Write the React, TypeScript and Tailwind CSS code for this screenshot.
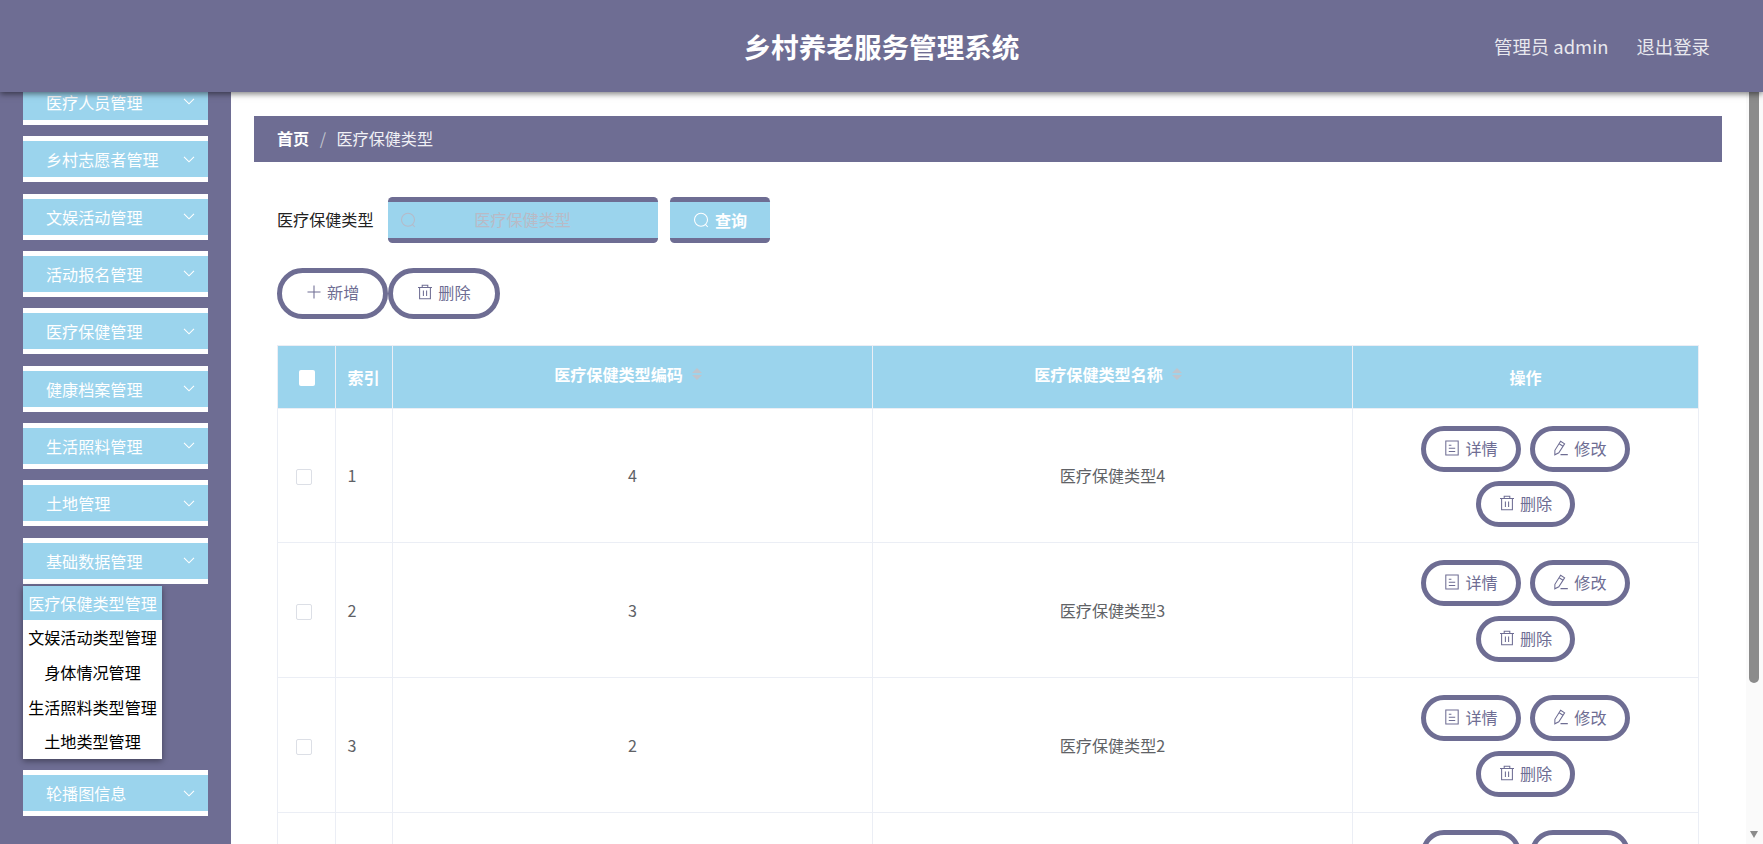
import { useState, type ReactNode } from "react";

const menus = [
  "医疗人员管理",
  "乡村志愿者管理",
  "文娱活动管理",
  "活动报名管理",
  "医疗保健管理",
  "健康档案管理",
  "生活照料管理",
  "土地管理",
  "基础数据管理",
  "轮播图信息",
];

const subMenus = ["医疗保健类型管理", "文娱活动类型管理", "身体情况管理", "生活照料类型管理", "土地类型管理"];

const rows = [
  { code: "4", name: "医疗保健类型4" },
  { code: "3", name: "医疗保健类型3" },
  { code: "2", name: "医疗保健类型2" },
  { code: "1", name: "医疗保健类型1" },
];

function Icon({ children, className = "size-4" }: { children: ReactNode; className?: string }) {
  return (
    <svg className={`shrink-0 ${className}`} viewBox="0 0 16 16" fill="none" stroke="currentColor" strokeWidth={1.05}>
      {children}
    </svg>
  );
}

const SearchIcon = () => (
  <Icon>
    <circle cx="8" cy="7.8" r="6.5" />
    <path d="M12.4 12.4l2.4 2.6" />
  </Icon>
);

const PlusIcon = () => (
  <Icon>
    <path d="M8 1.5v13M1.5 8h13" />
  </Icon>
);

const TrashIcon = () => (
  <Icon>
    <path d="M1 3.5h14M5.2 3.5V1.2h5.6v2.3M2.6 3.5v11.3h10.8V3.5M6.4 6.5v5.5M9.6 6.5v5.5" />
  </Icon>
);

const DetailIcon = () => (
  <Icon>
    <path d="M1.8 1h12.4v14H1.8zM4.8 5.2h2.6M4.8 8.2h6.4M4.8 11.4h6.4" />
  </Icon>
);

const EditIcon = () => (
  <Icon>
    <path d="M7.6 1.3l4 2.5-5.8 9-4 2 .1-4.5zM6.1 3.7l4 2.5M7.5 14.6h7.3" />
  </Icon>
);

const ChevronIcon = () => (
  <svg className="h-[7px] w-3" viewBox="0 0 12 7" fill="none" stroke="currentColor" strokeWidth={1.1}>
    <path d="M1 0.8L6 5.8l5-5" />
  </svg>
);

function PillButton({ icon, label, large = false }: { icon: ReactNode; label: string; large?: boolean }) {
  return (
    <button
      className={`flex items-center justify-center gap-[5px] rounded-full border-[5px] border-[#6e6d93] bg-white pb-[2px] text-[16.1px] leading-none text-[#6e6d93] ${
        large ? "h-[51.6px] w-[111.3px]" : "h-[46px] w-[99.5px]"
      }`}
    >
      {icon}
      <span>{label}</span>
    </button>
  );
}

function SortHeader({ label }: { label: string }) {
  return (
    <div className="flex items-center justify-center border-r border-[#ebeef5] pr-[9px] pb-[5px]">
      <span>{label}</span>
      <span className="ml-[9px] flex flex-col gap-[2px]">
        <span className="border-x-[5px] border-b-[5px] border-x-transparent border-b-[#c0c4cc]" />
        <span className="border-x-[5px] border-t-[5px] border-x-transparent border-t-[#c0c4cc]" />
      </span>
    </div>
  );
}

export default function App() {
  const [active, setActive] = useState(0);

  return (
    <div className="flex h-[844px] w-[1763px] flex-col overflow-hidden bg-white font-['Noto_Sans_CJK_SC',sans-serif] text-[16.1px]">
      {/* Top bar */}
      <header className="relative z-10 grid h-[92px] shrink-0 grid-cols-[1fr_auto_1fr] items-center bg-[#6e6d93] pt-[2px] shadow-[0_2px_6px_rgba(0,0,0,0.5)]">
        <span />
        <h1 className="text-[27.6px] font-bold text-white">乡村养老服务管理系统</h1>
        <div className="flex justify-end gap-7 pr-[53px] text-[18.4px] text-[#e8e8ee]">
          <span>管理员 admin</span>
          <span>退出登录</span>
        </div>
      </header>

      <div className="flex min-h-0 flex-1">
        {/* Sidebar, scrolled a little past its first entry */}
        <aside className="w-[231px] shrink-0 overflow-hidden bg-[#6e6d93] pl-[23px]">
          <div className="-mt-[13px] flex w-[185px] flex-col">
            {menus.map((menu) => (
              <div key={menu} className="mb-[11.5px]">
                <div className="flex h-[45.85px] items-center justify-between border-y-[5px] border-white bg-[#9bd4ed] pr-[13px] pl-[23px] text-white">
                  <span>{menu}</span>
                  <ChevronIcon />
                </div>
                {menu === "基础数据管理" && (
                  <ul className="mt-[2.3px] w-[139px] bg-white text-center text-black shadow-[0_2px_6px_rgba(0,0,0,0.4)]">
                    {subMenus.map((sub, i) => (
                      <li
                        key={sub}
                        onClick={() => setActive(i)}
                        className={`h-[34.6px] cursor-pointer leading-[34px] whitespace-nowrap ${
                          i === active ? "bg-[#9bd4ed] text-white" : ""
                        }`}
                      >
                        {sub}
                      </li>
                    ))}
                  </ul>
                )}
              </div>
            ))}
          </div>
        </aside>

        <main className="min-w-0 flex-1 overflow-hidden pt-[23.5px] pl-[23px]">
          {/* Breadcrumb */}
          <div className="flex h-[46px] w-[1468px] items-center bg-[#6e6d93] pl-[23px] text-[#f0f0f5]">
            <span className="font-bold text-white">首页</span>
            <span className="mx-[10.5px] text-[#c0c4cc]">/</span>
            <span>医疗保健类型</span>
          </div>

          <div className="w-[1445px] pl-[23px]">
            {/* Search form */}
            <div className="mt-[35px] flex items-center">
              <span className="text-[#222]">医疗保健类型</span>
              <div className="ml-[14px] flex h-[46px] w-[270px] items-center rounded-[4.6px] border-y-[5px] border-[#6e6d93] bg-[#9bd4ed] pl-3 text-[#b6bac8]">
                <SearchIcon />
                <input
                  placeholder="医疗保健类型"
                  className="mr-7 min-w-0 flex-1 bg-transparent text-center outline-none placeholder:text-[#b9bac6]"
                />
              </div>
              <button className="ml-3 flex h-[46px] w-[100px] items-center justify-center gap-[6px] rounded-[4.6px] border-y-[5px] border-[#6e6d93] bg-[#9bd4ed] pt-px pl-px font-bold text-white">
                <SearchIcon />
                <span>查询</span>
              </button>
            </div>

            {/* Toolbar */}
            <div className="mt-[25px] flex">
              <PillButton large icon={<PlusIcon />} label="新增" />
              <PillButton large icon={<TrashIcon />} label="删除" />
            </div>

            {/* Table */}
            <div className="mt-[26px] border-t border-l border-[#ebeef5]">
              <div className="grid h-[62.5px] grid-cols-[58px_57px_480px_480px_1fr] border-b border-[#ebeef5] bg-[#9bd4ed] font-bold text-white">
                <div className="flex items-center justify-center border-r border-[#ebeef5] pt-[2px]">
                  <span className="size-4 rounded-[2px] bg-white" />
                </div>
                <div className="flex items-center border-r border-[#ebeef5] pl-[11.5px]">索引</div>
                <SortHeader label="医疗保健类型编码" />
                <SortHeader label="医疗保健类型名称" />
                <div className="flex items-center justify-center border-r border-[#ebeef5]">操作</div>
              </div>
              {rows.map((row, i) => (
                <div
                  key={row.code}
                  className="grid h-[134.9px] grid-cols-[58px_57px_480px_480px_1fr] border-b border-[#ebeef5] text-[#606266]"
                >
                  <div className="flex items-center border-r border-[#ebeef5] pt-[3px] pl-[18px]">
                    <span className="size-4 rounded-[2px] border border-[#dcdfe6] bg-white" />
                  </div>
                  <div className="flex items-center border-r border-[#ebeef5] pb-px pl-[11.5px]">{i + 1}</div>
                  <div className="flex items-center justify-center border-r border-[#ebeef5] pb-px">{row.code}</div>
                  <div className="flex items-center justify-center border-r border-[#ebeef5] pb-px">{row.name}</div>
                  <div className="flex flex-wrap content-start justify-center gap-x-[9.4px] gap-y-[9.3px] border-r border-[#ebeef5] px-11 pt-[17px]">
                    <PillButton icon={<DetailIcon />} label="详情" />
                    <PillButton icon={<EditIcon />} label="修改" />
                    <PillButton icon={<TrashIcon />} label="删除" />
                  </div>
                </div>
              ))}
            </div>
          </div>
        </main>

        {/* Scrollbar */}
        <div className="flex w-[17px] shrink-0 flex-col items-center justify-between bg-[#fafafa] pb-[6px]">
          <span className="mr-px h-[591px] w-[10px] rounded-b-full bg-[#8b8b8b]" />
          <span className="mr-px border-x-[4.5px] border-t-[7px] border-x-transparent border-t-[#8b8b8b]" />
        </div>
      </div>
    </div>
  );
}
